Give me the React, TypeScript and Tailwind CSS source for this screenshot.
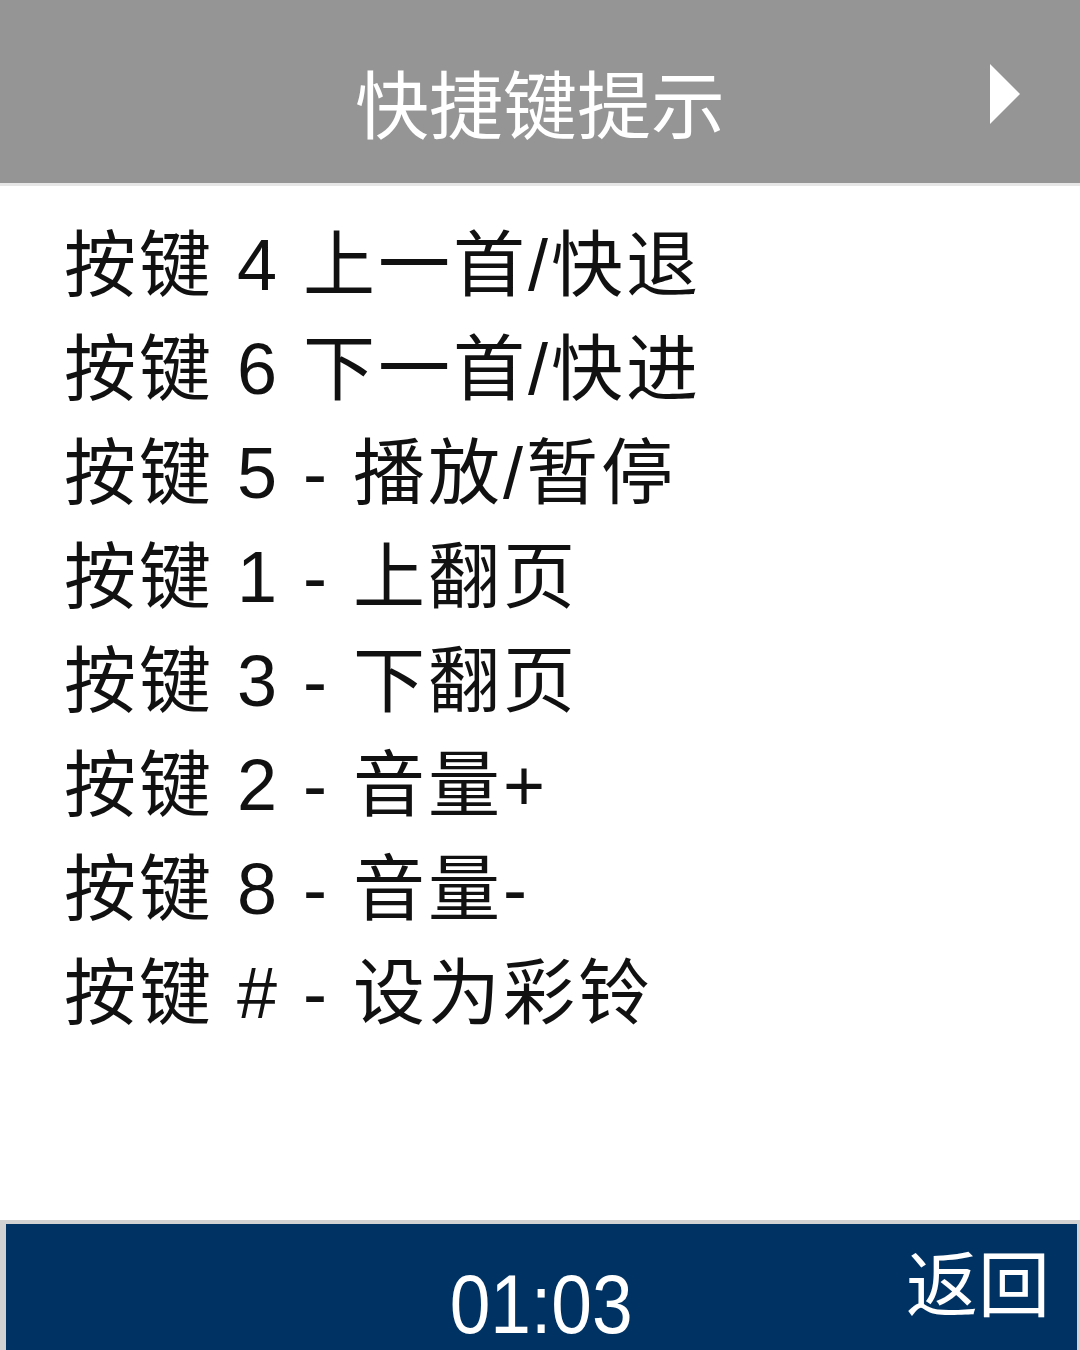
import React from 'react'

const SHORTCUTS = [
  '按键 4 上一首/快退',
  '按键 6 下一首/快进',
  '按键 5 - 播放/暂停',
  '按键 1 - 上翻页',
  '按键 3 - 下翻页',
  '按键 2 - 音量+',
  '按键 8 - 音量-',
  '按键 # - 设为彩铃',
]

const FONT = "font-['Liberation_Sans','Noto_Sans_CJK_SC',sans-serif]"

function NextArrow() {
  return (
    <svg width="34" height="64" viewBox="0 0 34 64" className="absolute right-[58px] top-[62px]">
      <path d="M2 2 L32 32 L2 62 Z" fill="#ffffff" />
    </svg>
  )
}

export default function App() {
  return (
    <div className={`${FONT} w-[1080px] h-[1350px] bg-white flex flex-col overflow-hidden`}>
      <header className="relative h-[186px] shrink-0 bg-[#959595] border-b-[3px] border-[#e6e6e6] flex justify-center pt-[64px]">
        <h1 className="text-[74px] leading-[88px] text-white">快捷键提示</h1>
        <NextArrow />
      </header>

      <ul className="flex-1 pl-[64px] pt-[27px]">
        {SHORTCUTS.map((s) => (
          <li
            key={s}
            className="text-[72px] leading-[104px] text-[#111111] whitespace-pre tracking-[3px]"
          >
            {s}
          </li>
        ))}
      </ul>

      <footer className="h-[130px] shrink-0 border-t-[4px] border-l-[6px] border-r-[3px] border-[#d2d2d2] bg-[#003263] grid grid-cols-3 text-white">
        <div />
        <div className="flex justify-center pt-[36px]">
          <span className="text-[84px] leading-[88px] scale-x-[0.87] inline-block">01:03</span>
        </div>
        <div className="flex justify-end pr-[27px] pt-[20px]">
          <span className="text-[72px] leading-[84px]">返回</span>
        </div>
      </footer>
    </div>
  )
}
